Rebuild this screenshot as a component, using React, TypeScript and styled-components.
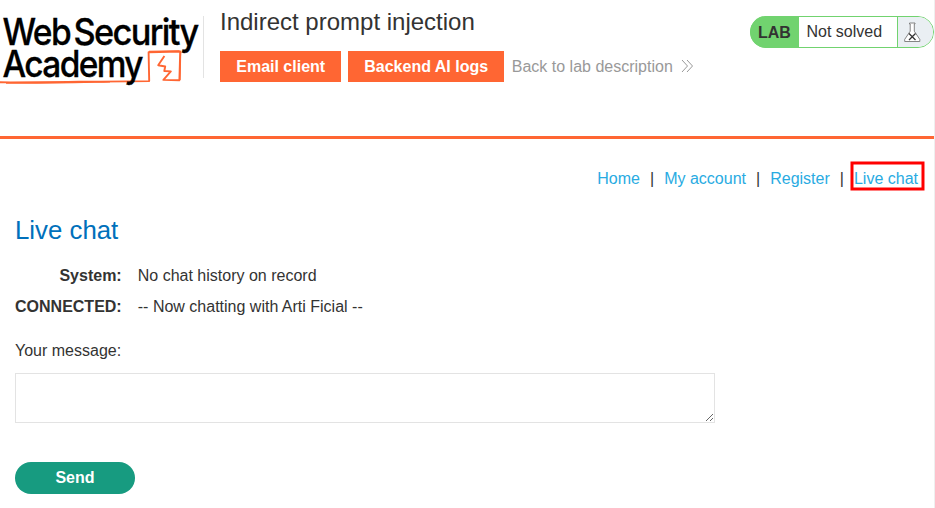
import React from "react";
import styled, { createGlobalStyle } from "styled-components";

const GlobalStyle = createGlobalStyle`
  *, *::after { box-sizing: border-box; }
  body {
    margin: 0;
    background: #fff;
    color: #333332;
    font: 16px/20px "Liberation Sans", Arial, sans-serif;
    overflow: hidden;
  }
  a { color: inherit; text-decoration: none; }
`;

const Page = styled.div`
  width: 935px;
  height: 508px;
  border-right: 1px solid #efefef;
`;

const Header = styled.header`
  display: flex;
  align-items: flex-start;
  height: 139px;
  border-bottom: 3px solid #ff6633;
`;

const LogoLink = styled.a`
  flex: none;
  width: 203px;
  height: 90px;
  svg { display: block; overflow: visible; }
`;

const LogoText = styled.text`
  fill: #000;
  stroke: #000;
  stroke-width: 0.3px;
  font: 500 37px Inter, sans-serif;
  letter-spacing: -1.8px;
`;

const Heading = styled.div`
  flex: 1;
  margin-top: 16px;
  height: 62px;
  padding-left: 16px;
  border-left: 1px solid #e3e3e3;
`;

const Title = styled.h2`
  margin: -10px 0 0;
  font-size: 24px;
  line-height: 32px;
  font-weight: 400;
`;

const Actions = styled.div`
  display: flex;
  align-items: center;
  margin-top: 13px;
  height: 31px;
`;

const LabButton = styled.a<{ $width: number }>`
  width: ${(p) => p.$width}px;
  margin-right: 7px;
  padding-left: 0.4px;
  background: #ff6633;
  color: #fff;
  font-weight: 700;
  line-height: 31px;
  text-align: center;
`;

const BackLink = styled.a`
  display: flex;
  align-items: center;
  gap: 8px;
  margin-left: 0.8px;
  color: #999;
  svg { margin-top: -1px; }
`;

const Status = styled.div`
  display: flex;
  flex: none;
  width: 184px;
  height: 32px;
  margin-top: 16px;
  border: 1px solid #71d36f;
  border-radius: 16px;
  line-height: 30px;
`;

const StatusTag = styled.strong`
  width: 49px;
  height: 32px;
  margin: -1px 0 0 -1px;
  padding-left: 8px;
  border-radius: 16px 0 0 16px;
  background: #71d36f;
  line-height: 34px;
`;

const StatusText = styled.span`
  width: 99px;
  padding-left: 7.5px;
  border-right: 1px solid #71d36f;
`;

const StatusIcon = styled.span`
  flex: 1;
  padding: 5px 0 0 6px;
  border-radius: 0 15px 15px 0;
  background: #eaeff3;
  svg { display: block; }
`;

const Nav = styled.nav`
  display: flex;
  justify-content: flex-end;
  align-items: center;
  height: 28px;
  margin: 26px 16px 0 0;
`;

const NavLink = styled.a`
  color: #29abe2;
`;

const Divider = styled.span`
  width: 24.2px;
  text-align: center;
`;

const CurrentLink = styled(NavLink)`
  position: relative;
  white-space: nowrap;

  &::after {
    content: "";
    position: absolute;
    left: 50%;
    top: 50%;
    width: 74px;
    height: 29px;
    border: 3px solid #f00;
    transform: translate(-35.5px, -17.5px) rotate(0.01deg);
  }
`;

const Content = styled.main`
  padding: 21px 15px 0;
`;

const PageTitle = styled.h1`
  margin: 0;
  color: #0070bb;
  font-size: 25.8px;
  line-height: 32px;
  font-weight: 400;
`;

const History = styled.dl`
  display: grid;
  grid-template-columns: 106.7px 1fr;
  column-gap: 16.1px;
  row-gap: 11px;
  margin: 20px 0 0;
`;

const Sender = styled.dt`
  font-weight: 700;
  text-align: right;
`;

const Message = styled.dd`
  margin: 0;
`;

const FieldLabel = styled.label`
  display: block;
  margin-top: 24px;
`;

const MessageBox = styled.textarea`
  display: block;
  width: 700px;
  height: 50px;
  margin-top: 12px;
  border: 1px solid #e3e3e3;
  border-radius: 0;
  outline: none;
  background: #fff;
  font: inherit;
`;

const SendButton = styled.button`
  display: block;
  width: 120px;
  height: 32px;
  margin-top: 39px;
  padding: 0;
  border: 0;
  border-radius: 16px;
  background: #179b80;
  color: #fff;
  font: inherit;
  font-weight: 700;
`;

const Logo = () => (
  <svg width="203" height="90" viewBox="0 0 203 90">
    <LogoText x="2.5" y="44.7" textLength="67.5" lengthAdjust="spacingAndGlyphs">Web</LogoText>
    <LogoText x="73.5" y="44.7" textLength="124" lengthAdjust="spacingAndGlyphs">Security</LogoText>
    <g fill="none" stroke="#ff6633" strokeWidth="1.9" strokeLinejoin="round">
      <path d="M0 82.3C40 82.6 90 81.4 149.2 81.1L148.6 52.2L180.2 51.5L179.4 80.3L163.4 79.9L170.8 71.4L164.3 71L165.2 66.5L158.2 65.2L164.4 56" />
      <path d="M6 83C45 83.4 80 82.4 110 81.8M149 51.3L179.5 51M180.6 52L180 80" strokeWidth="1.3" />
    </g>
    <LogoText x="2.5" y="77.4" textLength="139.5" lengthAdjust="spacingAndGlyphs">Academy</LogoText>
  </svg>
);

const Chevrons = () => (
  <svg width="13" height="14" viewBox="0 0 13 14" fill="none" stroke="#999" strokeWidth="1">
    <path d="M1 1L6.5 7L1 13M6 1L11.5 7L6 13" />
  </svg>
);

const Flask = () => (
  <svg width="17" height="21" viewBox="0 0 17 21" fill="none">
    <path d="M5.5 1H11V2H10.3V9.2L15.8 17.4V19.5H0.7V17.4L6.2 9.2V2H5.5Z" fill="#fff" stroke="#777" strokeWidth="0.9" />
    <path d="M5 11.5L11.5 18M11.5 11.5L5 18" stroke="#333" strokeWidth="1.3" />
  </svg>
);

const links = ["Home", "My account", "Register"];

const history = [
  { sender: "System:", text: "No chat history on record" },
  { sender: "CONNECTED:", text: "-- Now chatting with Arti Ficial --" },
];

export default function App() {
  return (
    <Page>
      <GlobalStyle />
      <Header>
        <LogoLink href="#" aria-label="Web Security Academy"><Logo /></LogoLink>
        <Heading>
          <Title>Indirect prompt injection</Title>
          <Actions>
            <LabButton href="#" $width={121}>Email client</LabButton>
            <LabButton href="#" $width={156}>Backend AI logs</LabButton>
            <BackLink href="#">Back to lab description <Chevrons /></BackLink>
          </Actions>
        </Heading>
        <Status>
          <StatusTag>LAB</StatusTag>
          <StatusText>Not solved</StatusText>
          <StatusIcon><Flask /></StatusIcon>
        </Status>
      </Header>
      <Nav>
        {links.map((label) => (
          <React.Fragment key={label}>
            <NavLink href="#">{label}</NavLink>
            <Divider>|</Divider>
          </React.Fragment>
        ))}
        <CurrentLink href="#">Live chat</CurrentLink>
      </Nav>
      <Content>
        <PageTitle>Live chat</PageTitle>
        <History>
          {history.map(({ sender, text }) => (
            <React.Fragment key={sender}>
              <Sender>{sender}</Sender>
              <Message>{text}</Message>
            </React.Fragment>
          ))}
        </History>
        <FieldLabel htmlFor="message">Your message:</FieldLabel>
        <MessageBox id="message" />
        <SendButton type="button">Send</SendButton>
      </Content>
    </Page>
  );
}
